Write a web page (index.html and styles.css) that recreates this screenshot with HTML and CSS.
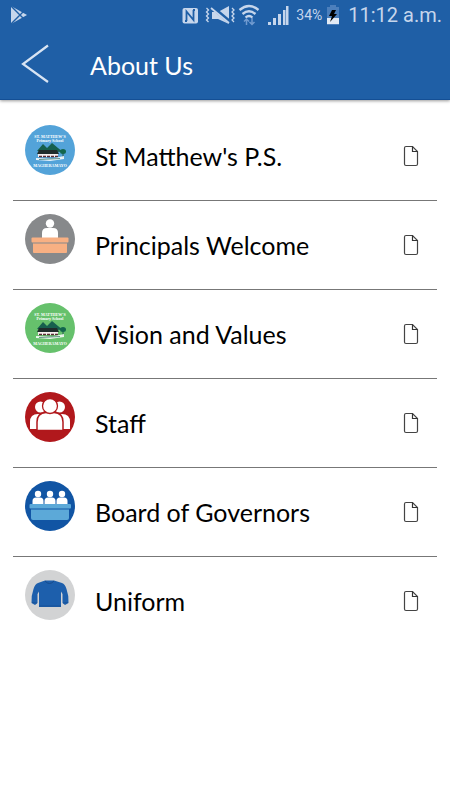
FILE: index.html
```html
<!DOCTYPE html>
<html lang="en">
<head>
<meta charset="utf-8">
<meta name="viewport" content="width=device-width, initial-scale=1">
<title>About Us</title>
<link rel="stylesheet" href="styles.css">
</head>
<body>
<svg class="defs" aria-hidden="true">
  <symbol id="page" viewBox="0 0 16 22">
    <path d="M3 1.5H9.500L14.500 6.500V19Q14.500 20.500 13 20.500H3Q1.500 20.500 1.500 19V3Q1.500 1.500 3 1.500Z" fill="#fff" stroke="#444" stroke-width="1.200"/>
    <path d="M9.500 1.500V6.500H14.500" fill="none" stroke="#333" stroke-width="1.200"/>
  </symbol>
  <symbol id="school" viewBox="0 0 50 50">
    <circle cx="25" cy="25" r="25"/>
    <path d="M12 26L18 19L22 23L27 18L33 23L38 27Z" fill="#17604e"/>
    <path d="M14 25H32L34 29H12Z" fill="#202c2b"/>
    <path d="M13 29H33V32H13Z" fill="#f6eeee"/>
    <path d="M14 31.500H33" stroke="#592d35" stroke-width="1.500" stroke-dasharray="3 1"/>
    <path d="M38 28V33" stroke="#24564c" stroke-width="1"/>
    <ellipse cx="38" cy="26.500" rx="3" ry="2.500" fill="#12664d"/>
    <path d="M11 33L27 33.500L39 31V34L25 36L11 35Z" fill="#fff" opacity=".85"/>
    <path d="M14 34.500L35 33.500" stroke="#286b5b" stroke-width=".7"/>
  </symbol>
</svg>

<header class="header">
  <div class="status">
    <svg class="play" width="17" height="18" viewBox="0 0 17 18"><path d="M0 0L16 9L0 18Z" fill="#c6d6ec"/><path d="M0 0L12 12M0 18L12 6" stroke="#1f5fa6" stroke-width="1.400"/></svg>
    <svg width="130" height="28" viewBox="180 0 130 28" class="signals">
      <rect x="182.500" y="7" width="15.500" height="15.500" rx="2" fill="#c6d6ec"/>
      <path d="M186.500 20V10.500L193.500 19V9M185 20H187M193 9H195" fill="none" stroke="#1f5fa6" stroke-width="1.800"/>
      <path d="M206.500 7L208.500 9L206.500 11L208.500 13L206.500 15L208.500 17L206.500 19L208.500 21M232 7L234 9L232 11L234 13L232 15L234 17L232 19L234 21" fill="none" stroke="#c6d6ec" stroke-width="1.300"/>
      <path d="M212 11H218L229 5V23L218 18H212Z" fill="#c6d6ec"/>
      <path d="M212 6L231 22" stroke="#1f5fa6" stroke-width="4"/>
      <path d="M211 7L229 22" stroke="#c6d6ec" stroke-width="1.800"/>
      <path d="M239.500 9Q249 1 258.500 9M242.500 13Q249 7.500 255.500 13M245.500 16.500Q249 13.500 252.500 16.500" fill="none" stroke="#c6d6ec" stroke-width="2.300"/>
      <path d="M246.500 24V18M244 20.500L246.500 18L249 20.500M252 17V23.500M249.500 21L252 23.500L254.500 21" fill="none" stroke="#719bd0" stroke-width="1.500"/>
      <path d="M268 21H271V24H268ZM273 17H276V24H273ZM278 13H281V24H278ZM283 9H285.500V24H283ZM286 5H288.500V24H286Z" fill="#c6d6ec"/>
    </svg>
    <span class="percent">34%</span>
    <svg class="battery" width="14" height="20" viewBox="0 0 14 20"><path d="M4 0H10V2H13V20H1V2H4Z" fill="#4c7fbc"/><path d="M1 13H13V19H1Z" fill="#e2eaf4"/><path d="M6 5H10L8 9H11L4 17L6 11H3Z" fill="#000"/></svg>
    <span class="clock">11:12 a.m.</span>
  </div>
  <div class="titlebar">
    <button class="back" type="button" aria-label="Back"><svg width="30" height="40" viewBox="0 0 30 40"><path d="M28 1.500L3 20L28 38" fill="none" stroke="#d8e4f3" stroke-width="2.200"/></svg></button>
    <h1 class="title">About Us</h1>
  </div>
</header>

<main>
  <ul class="list">
    <li><a class="row" href="#"><svg class="badge blue" viewBox="0 0 50 50"><use href="#school"/><g class="crest"><text x="25" y="13">ST. MATTHEW'S</text><text x="25" y="17">Primary School</text><text x="25" y="42">MAGHERAMAYO</text></g></svg><span class="label">St Matthew's P.S.</span><svg class="page"><use href="#page"/></svg></a></li>
    <li><a class="row" href="#"><svg class="badge" viewBox="0 0 50 50"><circle cx="25" cy="25" r="25" fill="#87898b"/><circle cx="25" cy="9.500" r="4.200" fill="#fff"/><path d="M17 24V19Q17 14 22 14H28Q33 14 33 19V24Z" fill="#fff"/><rect x="6.500" y="23.500" width="37" height="5" rx="1" fill="#f8b083"/><path d="M8 29.500H42V38Q42 39 41 39H9Q8 39 8 38Z" fill="#f8b083"/></svg><span class="label">Principals Welcome</span><svg class="page"><use href="#page"/></svg></a></li>
    <li><a class="row" href="#"><svg class="badge green" viewBox="0 0 50 50"><use href="#school"/><g class="crest"><text x="25" y="13">ST. MATTHEW'S</text><text x="25" y="17">Primary School</text><text x="25" y="42">MAGHERAMAYO</text></g></svg><span class="label">Vision and Values</span><svg class="page"><use href="#page"/></svg></a></li>
    <li><a class="row" href="#"><svg class="badge" viewBox="0 0 50 50"><circle cx="25" cy="25" r="25" fill="#b1181c"/><g fill="#fff"><circle cx="15.500" cy="15" r="5.500"/><circle cx="34.500" cy="15" r="5.500"/><path d="M5 37V30Q5 22 13 22H37Q45 22 45 30V37Z"/></g><path d="M12 38.500V30Q12 21 21 20.500H29Q38 21 38 30V38.500Z" fill="#fff" stroke="#b1181c" stroke-width="1.500"/><circle cx="25" cy="14" r="7.500" fill="#fff" stroke="#b1181c" stroke-width="1.300"/></svg><span class="label">Staff</span><svg class="page"><use href="#page"/></svg></a></li>
    <li><a class="row" href="#"><svg class="badge" viewBox="0 0 50 50"><circle cx="25" cy="25" r="25" fill="#1155a4"/><g fill="#fff"><circle cx="13" cy="13" r="3.200"/><circle cx="25" cy="13" r="3.200"/><circle cx="37" cy="13" r="3.200"/><path d="M7.500 23V20Q7.500 16.500 11 16.500H15Q18.500 16.500 18.500 20V23ZM19.500 23V20Q19.500 16.500 23 16.500H27Q30.500 16.500 30.500 20V23ZM31.500 23V20Q31.500 16.500 35 16.500H39Q42.500 16.500 42.500 20V23Z"/></g><rect x="4.500" y="23" width="41.500" height="4.500" rx="1" fill="#5ca9d8"/><path d="M6 28.500H44V37Q44 39 42 39H8Q6 39 6 37Z" fill="#5ca9d8"/></svg><span class="label">Board of Governors</span><svg class="page"><use href="#page"/></svg></a></li>
    <li><a class="row" href="#"><svg class="badge" viewBox="0 0 50 50"><circle cx="25" cy="25" r="25" fill="#d2d3d4"/><path d="M20 10.500H29L37 13Q40 14 41.500 19Q44 26 43.500 33L40 35L37.500 33V24L36 21.500V37H14V21.500L12.500 24V33L10 35L6.500 33Q6 26 8.500 19Q10 14 13 13Z" fill="#1d5fac"/><path d="M20 11Q24.500 16 29 11" fill="none" stroke="#164b8d" stroke-width="1"/><path d="M14 36H36M7 32.500L12 33M38 33L43 32.500" stroke="#174d91" stroke-width=".7"/></svg><span class="label">Uniform</span><svg class="page"><use href="#page"/></svg></a></li>
  </ul>
</main>
</body>
</html>
```
FILE: styles.css
```css
* {
  box-sizing: border-box;
}

body {
  margin: 0;
  background: #fff;
  color: #000;
  font-family: Lato, sans-serif;
}

.defs {
  position: absolute;
  width: 0;
  height: 0;
}

.header {
  background: #1f5fa6;
  border-bottom: 1px solid #144f95;
  box-shadow: 0 1px 3px rgba(0, 0, 0, 0.4);
  color: #fff;
}

.status {
  display: flex;
  align-items: center;
  height: 29px;
  padding: 0 8px 0 11px;
  color: #c6d6ec;
  font-family: Roboto, sans-serif;
}

.signals {
  margin-left: auto;
  margin-right: -14px;
}

.percent {
  font-size: 14px;
}

.battery {
  margin: 0 8px 0 4px;
}

.clock {
  font-size: 20px;
}

.titlebar {
  display: flex;
  align-items: center;
  height: 70px;
  padding: 0 20px;
}

.back {
  display: flex;
  width: 70px;
  padding: 0;
  border: 0;
  background: none;
}

.title {
  margin: 2px 0 0;
  font-size: 25px;
  font-weight: 400;
}

.list {
  margin: 0;
  padding: 12px 13px;
  list-style: none;
}

.row {
  display: flex;
  align-items: center;
  height: 89px;
  padding: 0 18px 0 12px;
  border-bottom: 1px solid #777;
  color: inherit;
  text-decoration: none;
}

li:last-child .row {
  border-color: transparent;
}

.badge {
  width: 50px;
  height: 50px;
  margin: 0 20px 13px 0;
}

.blue {
  fill: #53a3d9;
}

.green {
  fill: #66c16c;
}

.crest {
  fill: #fff;
  font-family: "Liberation Serif", serif;
  font-size: 4px;
  font-weight: 700;
  text-anchor: middle;
}

.label {
  flex: 1;
  font-size: 25px;
}

.page {
  width: 16px;
  height: 22px;
}
```
